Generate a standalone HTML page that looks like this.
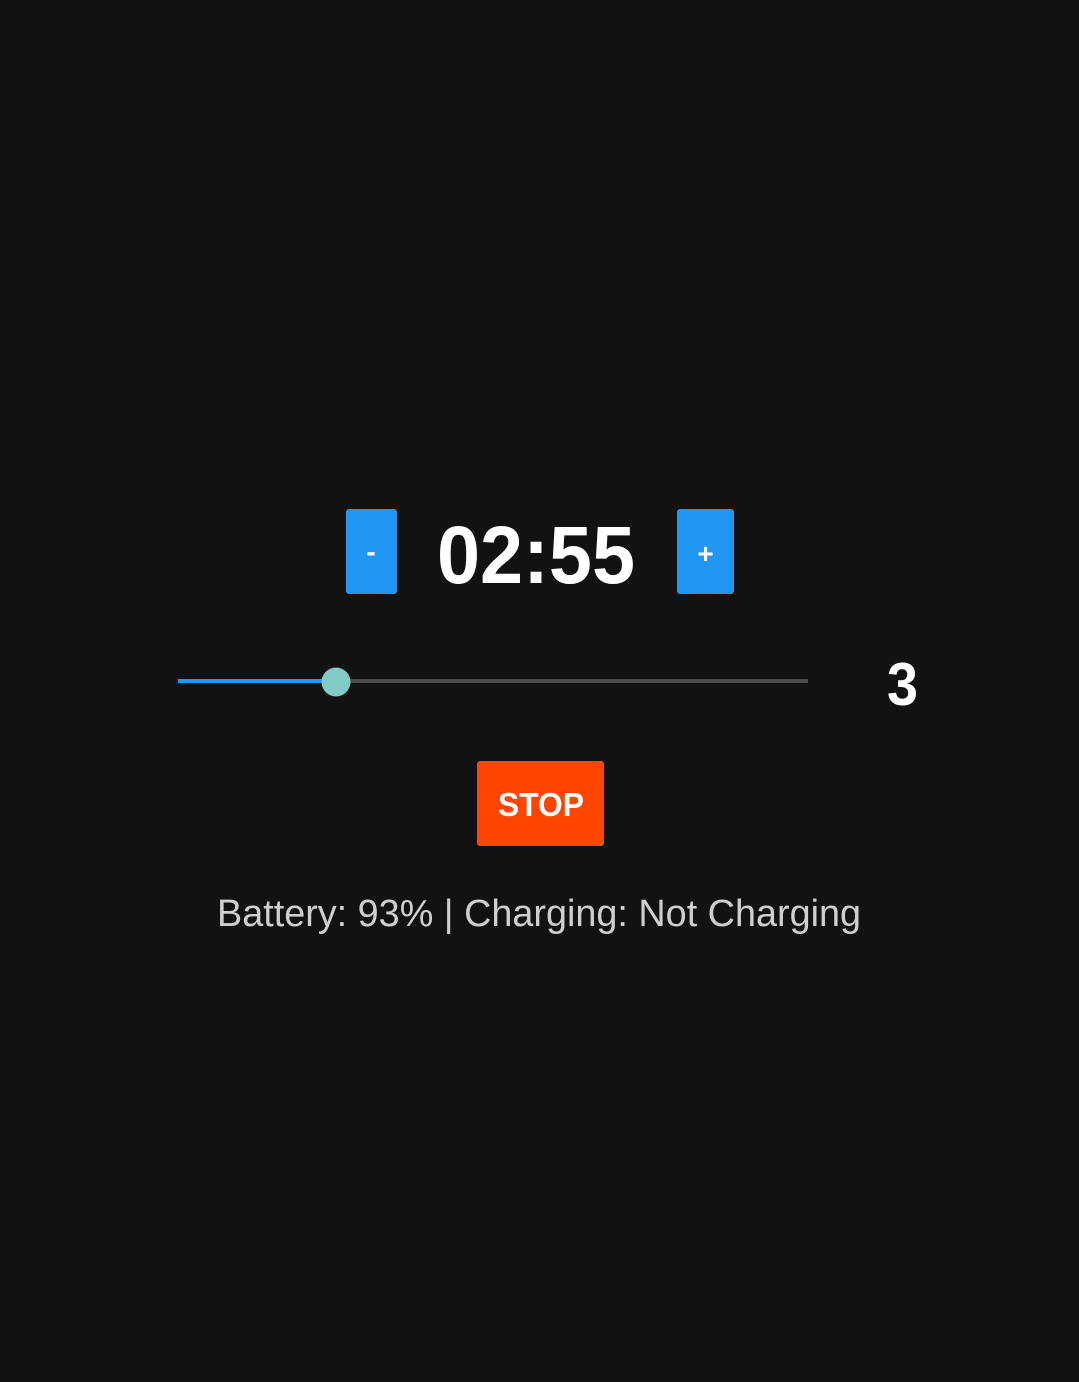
<!DOCTYPE html>
<html><head><meta charset="utf-8"><style>
html,body{margin:0;padding:0;background:#121212;width:1079px;height:1382px;overflow:hidden}
</style></head><body>
<svg width="1079" height="1382" xmlns="http://www.w3.org/2000/svg" style="display:block">
<rect width="1079" height="1382" fill="#121212"/>
<rect x="346" y="509" width="51" height="85" rx="3" fill="#2196f3"/>
<text x="371" y="561" font-family="Liberation Sans, sans-serif" font-weight="bold" font-size="28" fill="#fff" text-anchor="middle">-</text>
<rect x="677" y="509" width="57" height="85" rx="3" fill="#2196f3"/>
<text x="705.5" y="563" font-family="Liberation Sans, sans-serif" font-weight="bold" font-size="28" fill="#fff" text-anchor="middle">+</text>
<text x="437" y="583" font-family="Liberation Sans, sans-serif" font-weight="bold" font-size="82" fill="#fff" textLength="198" lengthAdjust="spacingAndGlyphs">02:55</text>
<rect x="178" y="679" width="630" height="4" fill="#4a4a4a"/>
<rect x="178" y="679" width="158" height="4" fill="#2196f3"/>
<circle cx="336" cy="682" r="14.5" fill="#80cbc4"/>
<text x="887" y="705" font-family="Liberation Sans, sans-serif" font-weight="bold" font-size="60" fill="#fff" textLength="31" lengthAdjust="spacingAndGlyphs">3</text>
<rect x="477" y="761" width="127" height="85" rx="3" fill="#ff4500"/>
<text x="498" y="816" font-family="Liberation Sans, sans-serif" font-weight="bold" font-size="33" fill="#fff" textLength="86" lengthAdjust="spacingAndGlyphs">STOP</text>
<text x="217" y="926" font-family="Liberation Sans, sans-serif" font-size="38" fill="#cfcfcf" textLength="644" lengthAdjust="spacingAndGlyphs">Battery: 93% | Charging: Not Charging</text>
</svg>
</body></html>
